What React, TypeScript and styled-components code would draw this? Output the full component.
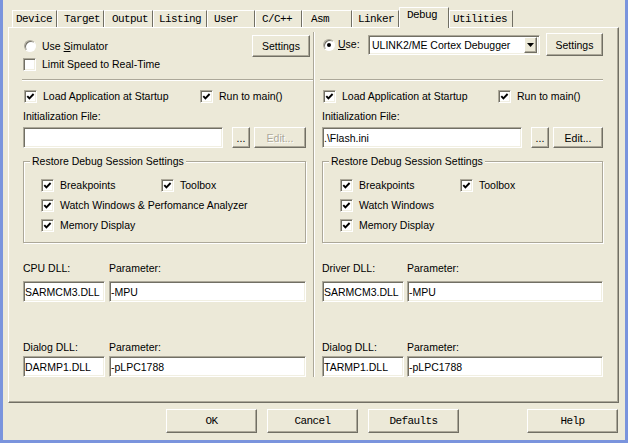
import React from "react";
import styled, { createGlobalStyle, css } from "styled-components";

const Global = createGlobalStyle`
  html, body { margin: 0; padding: 0; background: #ece9d8; }
  body {
    font-family: "Liberation Sans", Arial, sans-serif;
    font-size: 10.5px;
    color: #000;
  }
`;

const sunken = css`
  background: #fff;
  border: 1px solid;
  border-color: #aca899 #fff #fff #aca899;
  box-shadow: inset 1px 1px 0 #716f64, inset -1px -1px 0 #f1efe2;
`;

const raised = css`
  background: #ece9d8;
  border: 1px solid;
  border-color: #fff #716f64 #716f64 #fff;
  box-shadow: inset -1px -1px 0 #aca899;
`;

const Frame = styled.div`
  width: 628px;
  height: 443px;
  box-sizing: border-box;
  border-left: 3px solid #7a94dd;
  border-right: 3px solid #7a94dd;
  border-bottom: 3px solid #7a94dd;
  background: #ece9d8;
  padding: 7px 6px 0 5px;
  display: flex;
  flex-direction: column;
`;

const TabStrip = styled.div`
  position: relative;
  z-index: 2;
  display: flex;
  align-items: flex-end;
  height: 20px;
  padding-left: 4px;
`;

const Tab = styled.div<{ $w: number; $pad: number; $active?: boolean }>`
  box-sizing: border-box;
  width: ${(p) => p.$w}px;
  height: 17px;
  padding-left: ${(p) => p.$pad}px;
  border-top: 1px solid #fff;
  border-left: 1px solid #fff;
  border-right: 1px solid #716f64;
  font-family: "Liberation Mono", "DejaVu Sans Mono", monospace;
  font-size: 11px;
  letter-spacing: -0.6px;
  line-height: 16px;
  white-space: nowrap;
  ${(p) =>
    p.$active &&
    css`
      height: 21px;
      margin-bottom: -1px;
      background: #ece9d8;
      line-height: 15px;
    `}
`;

const Panel = styled.div`
  position: relative;
  z-index: 1;
  box-sizing: border-box;
  height: 376px;
  border: 1px solid;
  border-color: #fff #716f64 #716f64 #fff;
  box-shadow: inset -1px -1px 0 #aca899;
  display: grid;
  grid-template-columns: 283px 2px 281px;
  column-gap: 7px;
  padding: 0 15px 0 14px;
`;

const Divider = styled.div`
  align-self: start;
  margin-top: 4px;
  height: 345px;
  box-sizing: border-box;
  border-left: 1px solid #aca899;
  border-right: 1px solid #fff;
`;

const Col = styled.div`
  display: flex;
  flex-direction: column;
  min-width: 0;
`;

const TopSection = styled.div`
  height: 51px;
  display: flex;
  flex-direction: column;
`;

const Row = styled.div<{ $mt: number; $h: number; $pl?: number }>`
  display: flex;
  align-items: center;
  margin-top: ${(p) => p.$mt}px;
  height: ${(p) => p.$h}px;
  padding-left: ${(p) => p.$pl ?? 0}px;
`;

const Separator = styled.div<{ $ml: number; $mr: number }>`
  height: 2px;
  box-sizing: border-box;
  border-top: 1px solid #aca899;
  border-bottom: 1px solid #fff;
  margin: 0 ${(p) => p.$mr}px 0 ${(p) => p.$ml}px;
`;

const Text = styled.div<{ $mt: number }>`
  margin-top: ${(p) => p.$mt}px;
  height: 13px;
  line-height: 13px;
  white-space: nowrap;
`;

const Item = styled.label<{ $w?: number; $gap?: number }>`
  display: flex;
  align-items: center;
  gap: ${(p) => p.$gap ?? 6}px;
  height: 13px;
  line-height: 13px;
  white-space: nowrap;
  ${(p) => p.$w && css`width: ${p.$w}px; flex: none;`}
`;

const Box = styled.span`
  ${sunken}
  width: 13px;
  height: 13px;
  box-sizing: border-box;
  display: flex;
  align-items: center;
  justify-content: center;
  flex: none;
`;

const RadioDot = styled.span<{ $on?: boolean }>`
  width: 12px;
  height: 12px;
  border-radius: 50%;
  box-sizing: border-box;
  background: #fff;
  border: 1px solid;
  border-color: #aca899 #fff #fff #aca899;
  box-shadow: inset 1px 1px 0 #716f64;
  display: flex;
  align-items: center;
  justify-content: center;
  flex: none;
  &::after {
    content: "";
    width: 4px;
    height: 4px;
    border-radius: 50%;
    background: #000;
    display: ${(p) => (p.$on ? "block" : "none")};
  }
`;

const WinButton = styled.button<{ $w?: number; $h: number; $off?: boolean; $ml?: number; $mr?: number }>`
  ${raised}
  box-sizing: border-box;
  ${(p) => (p.$w ? css`width: ${p.$w}px; flex: none;` : css`flex: 1;`)}
  height: ${(p) => p.$h}px;
  margin: 0 ${(p) => p.$mr ?? 0}px 0 ${(p) => p.$ml ?? 0}px;
  padding: 0;
  font-family: "Liberation Sans", Arial, sans-serif;
  font-size: 10.5px;
  color: #000;
  ${(p) =>
    p.$off &&
    css`
      color: #aca899;
      text-shadow: 1px 1px 0 #fff;
    `}
`;

const Field = styled.input<{ $w?: number }>`
  ${sunken}
  box-sizing: border-box;
  height: 21px;
  ${(p) => (p.$w ? css`width: ${p.$w}px; flex: none;` : css`width: auto; flex: 1;`)}
  min-width: 0;
  margin: 0;
  padding: 0 1px;
  font-family: "Liberation Sans", Arial, sans-serif;
  font-size: 10.5px;
  color: #000;
  outline: none;
`;

const Select = styled.div`
  ${sunken}
  margin-left: auto;
  width: 172px;
  height: 20px;
  box-sizing: border-box;
  display: flex;
  align-items: center;
  padding: 0 2px 0 3px;
`;

const SelectText = styled.span`
  flex: 1;
  white-space: nowrap;
  overflow: hidden;
`;

const DropBtn = styled.span`
  ${raised}
  width: 13px;
  height: 16px;
  box-sizing: border-box;
  display: flex;
  align-items: center;
  justify-content: center;
`;

const InitRow = styled.div`
  display: flex;
  margin-top: 4px;
  height: 21px;
`;

const Group = styled.div`
  position: relative;
  margin-top: 13px;
  height: 82px;
  box-sizing: border-box;
  border: 1px solid #aca899;
  box-shadow: inset 1px 1px 0 #fff, 1px 1px 0 #fff;
  padding: 13px 0 0 17px;
  display: grid;
  grid-template-columns: 120px auto;
  grid-auto-rows: 20px;
  align-items: center;
`;

const GroupTitle = styled.span`
  position: absolute;
  top: -7px;
  left: 6px;
  padding: 0 2px;
  line-height: 13px;
  background: #ece9d8;
  white-space: nowrap;
`;

const Wide = styled.div`
  grid-column: 1 / span 2;
`;

const DllGrid = styled.div<{ $mt: number; $h: number; $gap: number }>`
  display: grid;
  grid-template-columns: 82px 1fr;
  column-gap: ${(p) => p.$gap}px;
  margin-top: ${(p) => p.$mt}px;
  height: ${(p) => p.$h}px;
  line-height: 13px;
  white-space: nowrap;
`;

const DllField = styled(Field)`
  width: 100%;
`;

const ButtonBar = styled.div`
  display: flex;
  gap: 10px;
  margin-top: 6px;
  padding: 0 1px 0 158px;
`;

const BigButton = styled.button<{ $push?: boolean }>`
  ${raised}
  box-sizing: border-box;
  width: 91px;
  height: 24px;
  margin: 0 0 0 ${(p) => (p.$push ? "auto" : "0")};
  padding: 0;
  font-family: "Liberation Mono", "DejaVu Sans Mono", monospace;
  font-size: 11px;
  letter-spacing: -0.6px;
  color: #000;
`;

const Check = () => (
  <Box>
    <svg width="9" height="9" viewBox="0 0 9 9">
      <polyline points="1.3,4.1 3.4,6.3 7.6,2" fill="none" stroke="#000" strokeWidth="1.9" />
    </svg>
  </Box>
);

const CheckItem: React.FC<{ w?: number; children: React.ReactNode }> = ({ w, children }) => (
  <Item $w={w}>
    <Check />
    <span>{children}</span>
  </Item>
);

const tabs = [
  { t: "Device", w: 45, pad: 3 },
  { t: "Target", w: 47, pad: 6 },
  { t: "Output", w: 49, pad: 7 },
  { t: "Listing", w: 54, pad: 5 },
  { t: "User", w: 48, pad: 6 },
  { t: "C/C++", w: 47, pad: 6 },
  { t: "Asm", w: 50, pad: 8 },
  { t: "Linker", w: 47, pad: 5 },
  { t: "Debug", w: 50, pad: 7, active: true },
  { t: "Utilities", w: 64, pad: 3 },
];

type SideProps = {
  right?: boolean;
};

const DebugColumn: React.FC<SideProps> = ({ right }) => (
  <Col>
    <TopSection>
      {right ? (
        <Row $mt={5} $h={23} $pl={1}>
          <Item $gap={3}>
            <RadioDot $on />
            <span>
              <u>U</u>se:
            </span>
          </Item>
          <Select>
            <SelectText>ULINK2/ME Cortex Debugger</SelectText>
            <DropBtn>
              <svg width="7" height="4" viewBox="0 0 7 4">
                <polygon points="0,0 7,0 3.5,4" fill="#000" />
              </svg>
            </DropBtn>
          </Select>
          <WinButton $w={57} $h={23} $ml={6}>
            Settings
          </WinButton>
        </Row>
      ) : (
        <>
          <Row $mt={7} $h={22} $pl={1}>
            <Item>
              <RadioDot />
              <span>
                Use <u>S</u>imulator
              </span>
            </Item>
            <WinButton $w={58} $h={22} $ml={0} $mr={-4} style={{ marginLeft: "auto" }}>
              Settings
            </WinButton>
          </Row>
          <Row $mt={1} $h={13}>
            <Item>
              <Box />
              <span>Limit Speed to Real-Time</span>
            </Item>
          </Row>
        </>
      )}
    </TopSection>
    <Separator $ml={right ? -2 : -1} $mr={right ? 0 : -7} />
    <Row $mt={9} $h={13} $pl={1}>
      <CheckItem w={right ? 175 : 176}>Load Application at Startup</CheckItem>
      <CheckItem>Run to main()</CheckItem>
    </Row>
    <Text $mt={7}>Initialization File:</Text>
    <InitRow>
      <Field $w={200} readOnly defaultValue={right ? ".\\Flash.ini" : ""} />
      <WinButton $w={18} $h={21} $ml={9}>
        ...
      </WinButton>
      <WinButton $h={21} $ml={4} $off={!right}>
        Edit...
      </WinButton>
    </InitRow>
    <Group>
      <GroupTitle>Restore Debug Session Settings</GroupTitle>
      <CheckItem>Breakpoints</CheckItem>
      <CheckItem>Toolbox</CheckItem>
      <Wide>
        <CheckItem>{right ? "Watch Windows" : "Watch Windows & Perfomance Analyzer"}</CheckItem>
      </Wide>
      <Wide>
        <CheckItem>Memory Display</CheckItem>
      </Wide>
    </Group>
    <DllGrid $mt={19} $h={13} $gap={right ? 3 : 4}>
      <span>{right ? "Driver DLL:" : "CPU DLL:"}</span>
      <span>Parameter:</span>
    </DllGrid>
    <DllGrid $mt={6} $h={21} $gap={right ? 3 : 4}>
      <DllField readOnly defaultValue="SARMCM3.DLL" />
      <DllField readOnly defaultValue="-MPU" />
    </DllGrid>
    <DllGrid $mt={39} $h={13} $gap={right ? 3 : 4}>
      <span>Dialog DLL:</span>
      <span>Parameter:</span>
    </DllGrid>
    <DllGrid $mt={2} $h={21} $gap={right ? 3 : 4}>
      <DllField readOnly defaultValue={right ? "TARMP1.DLL" : "DARMP1.DLL"} />
      <DllField readOnly defaultValue="-pLPC1788" />
    </DllGrid>
  </Col>
);

export default function App() {
  return (
    <>
      <Global />
      <Frame>
        <TabStrip>
          {tabs.map((t) => (
            <Tab key={t.t} $w={t.w} $pad={t.pad} $active={t.active}>
              {t.t}
            </Tab>
          ))}
        </TabStrip>
        <Panel>
          <DebugColumn />
          <Divider />
          <DebugColumn right />
        </Panel>
        <ButtonBar>
          <BigButton>OK</BigButton>
          <BigButton>Cancel</BigButton>
          <BigButton>Defaults</BigButton>
          <BigButton $push>Help</BigButton>
        </ButtonBar>
      </Frame>
    </>
  );
}
